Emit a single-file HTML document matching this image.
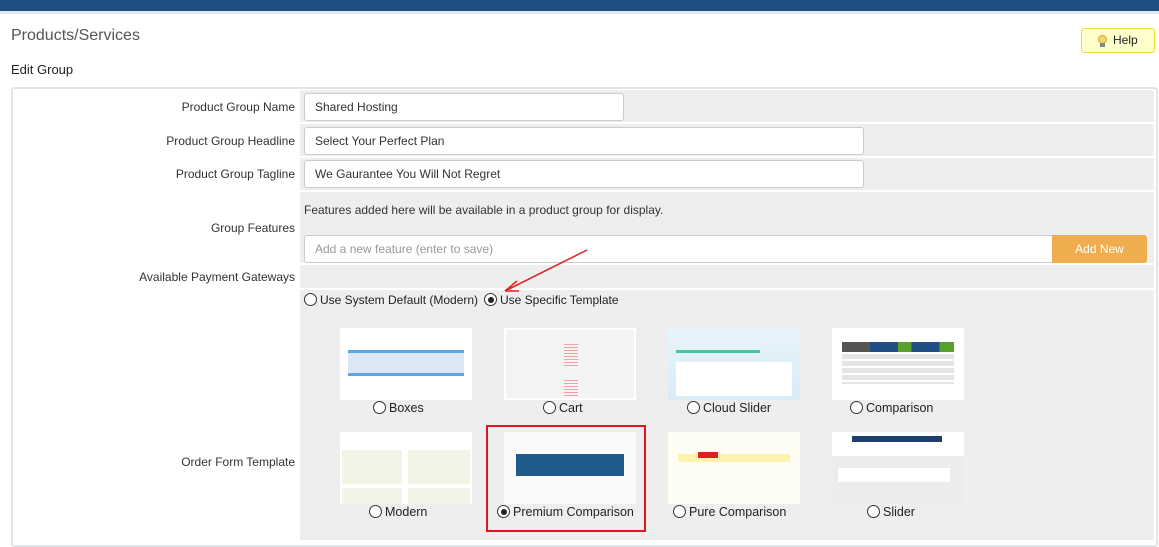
<!DOCTYPE html>
<html><head><meta charset="utf-8"><style>
*{box-sizing:border-box;margin:0;padding:0}
body{width:1159px;height:537px;overflow:hidden;background:#fff;font-family:"Liberation Sans",sans-serif;font-size:12px;color:#333;position:relative}
.abs{position:absolute}
.lbl{position:absolute;right:864px;text-align:right;font-size:12px;color:#333}
.fld{position:absolute;left:300px;width:854px;background:#eee}
.inp{position:absolute;background:#fff;border:1px solid #ccc;border-radius:3px;padding:0 10px;line-height:26px;height:28px;font-size:12px;color:#333}
.th{position:absolute;width:132px;height:72px;background:#fff;overflow:hidden}
.rl{position:absolute;font-size:12.5px;color:#222;white-space:nowrap}
.r{display:inline-block;width:13px;height:13px;border:1px solid #333;border-radius:50%;vertical-align:-2px;margin-right:3px;background:#fff;position:relative}
.r.on::after{content:"";position:absolute;left:2.5px;top:2.5px;width:6px;height:6px;border-radius:50%;background:#222}
</style></head><body>
<div class="abs" style="left:0;top:0;width:1159px;height:11px;background:#1e4f80"></div>
<div class="abs" style="left:0;top:11px;width:1159px;height:3px;background:#e4e8ec"></div>
<div class="abs" style="left:11px;top:27px;font-size:16px;color:#555">Products/Services</div>
<div class="abs" style="left:11px;top:62px;font-size:13px;color:#222">Edit Group</div>
<div class="abs" style="left:1081px;top:28px;width:74px;height:25px;background:#ffffcc;border:1px solid #eede3a;border-radius:3px;font-size:12px;line-height:23px;padding-left:31px;color:#222">Help</div>
<div class="abs" style="left:1098px;top:35px;width:9px;height:9px;border-radius:50%;background:#f8d86a;border:1px solid #c9a63a"></div>
<div class="abs" style="left:1100px;top:43px;width:5px;height:4px;background:#888"></div>
<div class="abs" style="left:11px;top:87px;width:1147px;height:460px;border:2px solid #e2e5e8;border-radius:3px"></div>

<div class="fld" style="top:90px;height:32px"></div>
<div class="fld" style="top:124px;height:32px"></div>
<div class="fld" style="top:158px;height:32px"></div>
<div class="fld" style="top:192px;height:71px"></div>
<div class="fld" style="top:265px;height:23px"></div>
<div class="fld" style="top:290px;height:250px"></div>

<div class="lbl" style="top:100px">Product Group Name</div>
<div class="lbl" style="top:134px">Product Group Headline</div>
<div class="lbl" style="top:167px">Product Group Tagline</div>
<div class="lbl" style="top:221px">Group Features</div>
<div class="lbl" style="top:270px">Available Payment Gateways</div>
<div class="lbl" style="top:455px">Order Form Template</div>

<div class="inp" style="left:304px;top:93px;width:320px">Shared Hosting</div>
<div class="inp" style="left:304px;top:127px;width:560px">Select Your Perfect Plan</div>
<div class="inp" style="left:304px;top:160px;width:560px">We Gaurantee You Will Not Regret</div>
<div class="abs" style="left:304px;top:203px;font-size:12px">Features added here will be available in a product group for display.</div>
<div class="inp" style="left:304px;top:235px;width:750px;border-radius:3px 0 0 3px;color:#999">Add a new feature (enter to save)</div>
<div class="abs" style="left:1052px;top:235px;width:95px;height:28px;background:#f0ad4e;border-radius:0 3px 3px 0;color:#fff;text-align:center;line-height:28px;font-size:12px">Add New</div>

<div class="rl" style="left:304px;top:293px;font-size:12px"><span class="r"></span>Use System Default (Modern)</div>
<div class="rl" style="left:484px;top:293px;font-size:12px"><span class="r on"></span>Use Specific Template</div>
<svg class="abs" style="left:495px;top:245px" width="100" height="55"><line x1="92" y1="5" x2="12" y2="45" stroke="#e02020" stroke-width="1.5"/><path d="M10 46 L22 36 M10 46 L24 46" stroke="#e02020" stroke-width="1.5" fill="none"/></svg>

<div class="th" style="left:340px;top:328px"><div class="abs" style="left:8px;top:22px;width:116px;height:26px;background:#dbe7f5;border-top:3px solid #5aa7e8;border-bottom:3px solid #5aa7e8"></div></div>
<div class="th" style="left:504px;top:328px;background:#f4f4f4;border:2px solid #fff"><div class="abs" style="left:58px;top:14px;width:14px;height:24px;background:repeating-linear-gradient(#f0a0a0 0 1px,transparent 1px 3px)"></div><div class="abs" style="left:58px;top:50px;width:14px;height:18px;background:repeating-linear-gradient(#f0a0a0 0 1px,transparent 1px 3px)"></div></div>
<div class="th" style="left:668px;top:328px;background:linear-gradient(#e8f4fa,#d8ecf6)"><div class="abs" style="left:8px;top:22px;width:84px;height:3px;background:#46c7a0"></div><div class="abs" style="left:8px;top:34px;width:116px;height:34px;background:#fff"></div></div>
<div class="th" style="left:832px;top:328px"><div class="abs" style="left:10px;top:14px;width:112px;height:10px;background:linear-gradient(90deg,#555 25%,#1f4f85 25%,#1f4f85 50%,#5aa02c 50%,#5aa02c 62%,#1f4f85 62%,#1f4f85 87%,#5aa02c 87%)"></div><div class="abs" style="left:10px;top:26px;width:112px;height:30px;background:repeating-linear-gradient(#e5e5e5 0 5px,#fff 5px 7px)"></div></div>
<div class="th" style="left:340px;top:432px;background:#fff"><div class="abs" style="left:2px;top:18px;width:60px;height:34px;background:#f3f3e6"></div><div class="abs" style="left:68px;top:18px;width:62px;height:34px;background:#f3f3e6"></div><div class="abs" style="left:2px;top:56px;width:60px;height:16px;background:#f3f3e6"></div><div class="abs" style="left:68px;top:56px;width:62px;height:16px;background:#f3f3e6"></div></div>
<div class="th" style="left:504px;top:432px;background:#fafafa"><div class="abs" style="left:12px;top:22px;width:108px;height:22px;background:#1e5d8a"></div></div>
<div class="th" style="left:668px;top:432px;background:#fdfdf4"><div class="abs" style="left:10px;top:22px;width:112px;height:8px;background:#fff3b0"></div><div class="abs" style="left:30px;top:20px;width:20px;height:6px;background:#e02020"></div></div>
<div class="th" style="left:832px;top:432px;background:#fff"><div class="abs" style="left:20px;top:4px;width:90px;height:6px;background:#1e3f6a"></div><div class="abs" style="left:0;top:24px;width:132px;height:48px;background:#ececec"></div><div class="abs" style="left:6px;top:36px;width:112px;height:14px;background:#fff"></div></div>

<div class="rl" style="left:373px;top:401px"><span class="r"></span>Boxes</div>
<div class="rl" style="left:543px;top:401px"><span class="r"></span>Cart</div>
<div class="rl" style="left:687px;top:401px"><span class="r"></span>Cloud Slider</div>
<div class="rl" style="left:850px;top:401px"><span class="r"></span>Comparison</div>
<div class="rl" style="left:369px;top:505px"><span class="r"></span>Modern</div>
<div class="rl" style="left:497px;top:505px"><span class="r on"></span>Premium Comparison</div>
<div class="rl" style="left:673px;top:505px"><span class="r"></span>Pure Comparison</div>
<div class="rl" style="left:867px;top:505px"><span class="r"></span>Slider</div>
<div class="abs" style="left:486px;top:425px;width:160px;height:107px;border:2px solid #e0141e"></div>
</body></html>
